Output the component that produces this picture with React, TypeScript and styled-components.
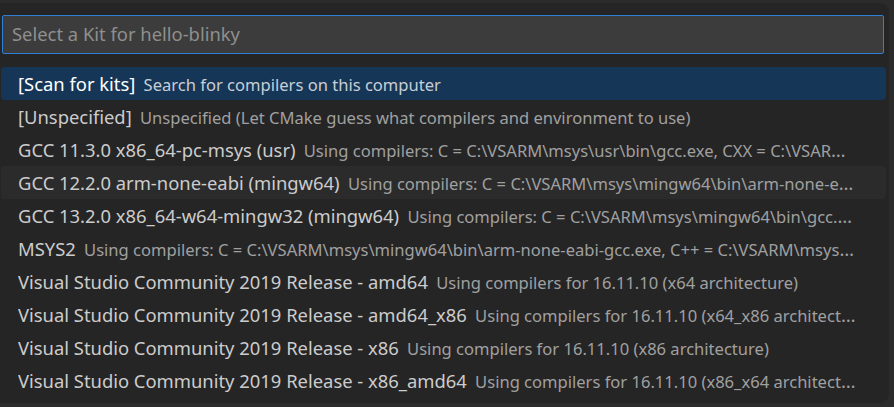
import React from "react";
import styled, { createGlobalStyle } from "styled-components";

const GlobalStyle = createGlobalStyle`
  html, body {
    margin: 0;
    padding: 0;
    background: #2b2b2b;
  }
  body {
    font-family: "Noto Sans", "Open Sans", sans-serif;
  }
`;

const Page = styled.div`
  width: 894px;
  height: 407px;
  overflow: hidden;
  background: #2b2b2b;
  display: flex;
  flex-direction: column;
`;

const Widget = styled.div`
  margin-top: 3px;
  width: 889px;
  height: 400px;
  background: #252526;
  border-radius: 0 9px 9px 0;
  padding-top: 12px;
  box-sizing: border-box;
  overflow: hidden;
  display: flex;
  flex-direction: column;
`;

const Input = styled.input`
  margin-left: 2px;
  width: 882px;
  height: 39px;
  box-sizing: border-box;
  background: #3c3c3c;
  border: 1px solid #2f7fd6;
  border-radius: 2px;
  outline: none;
  padding: 0 0 2px 9px;
  font-family: "Noto Sans", "Open Sans", sans-serif;
  font-size: 18.4px;
  color: #cccccc;
  &::placeholder {
    color: #8f8f8f;
  }
`;

const List = styled.div`
  margin-top: 13px;
  display: flex;
  flex-direction: column;
`;

const Row = styled.div<{ $state?: "selected" | "hover" }>`
  margin-left: 1px;
  width: 885px;
  height: 33px;
  box-sizing: border-box;
  padding: 0 28px 1px 17px;
  display: flex;
  align-items: center;
  border-radius: 4px;
  background: ${(p) =>
    p.$state === "selected" ? "#153657" : p.$state === "hover" ? "#2b2b2c" : "transparent"};
`;

const Line = styled.div<{ $selected?: boolean }>`
  flex: 1;
  min-width: 0;
  white-space: nowrap;
  overflow: hidden;
  text-overflow: ellipsis;
  font-size: 18.4px;
  color: ${(p) => (p.$selected ? "#c8ced6" : "#a0a0a0")};
`;

const Label = styled.span<{ $selected?: boolean }>`
  color: ${(p) => (p.$selected ? "#ffffff" : "#cccccc")};
`;

const Desc = styled.span`
  font-size: 0.9em;
  margin-left: 0.5em;
`;

type Item = { label: string; desc: string; state?: "selected" | "hover" };

const items: Item[] = [
  { label: "[Scan for kits]", desc: "Search for compilers on this computer", state: "selected" },
  { label: "[Unspecified]", desc: "Unspecified (Let CMake guess what compilers and environment to use)" },
  {
    label: "GCC 11.3.0 x86_64-pc-msys (usr)",
    desc: "Using compilers: C = C:\\VSARM\\msys\\usr\\bin\\gcc.exe, CXX = C:\\VSARM\\msys\\usr\\bin\\g++.exe",
  },
  {
    label: "GCC 12.2.0 arm-none-eabi (mingw64)",
    desc: "Using compilers: C = C:\\VSARM\\msys\\mingw64\\bin\\arm-none-eabi-gcc.exe, CXX = C:\\VSARM\\msys\\mingw64\\bin\\arm-none-eabi-g++.exe",
    state: "hover",
  },
  {
    label: "GCC 13.2.0 x86_64-w64-mingw32 (mingw64)",
    desc: "Using compilers: C = C:\\VSARM\\msys\\mingw64\\bin\\gcc.exe, CXX = C:\\VSARM\\msys\\mingw64\\bin\\g++.exe",
  },
  {
    label: "MSYS2",
    desc: "Using compilers: C = C:\\VSARM\\msys\\mingw64\\bin\\arm-none-eabi-gcc.exe, C++ = C:\\VSARM\\msys\\mingw64\\bin\\arm-none-eabi-g++.exe",
  },
  { label: "Visual Studio Community 2019 Release - amd64", desc: "Using compilers for 16.11.10 (x64 architecture)" },
  { label: "Visual Studio Community 2019 Release - amd64_x86", desc: "Using compilers for 16.11.10 (x64_x86 architecture)" },
  { label: "Visual Studio Community 2019 Release - x86", desc: "Using compilers for 16.11.10 (x86 architecture)" },
  { label: "Visual Studio Community 2019 Release - x86_amd64", desc: "Using compilers for 16.11.10 (x86_x64 architecture)" },
];

export default function App() {
  return (
    <>
      <GlobalStyle />
      <Page>
        <Widget>
          <Input placeholder="Select a Kit for hello-blinky" readOnly />
          <List>
            {items.map((it) => (
              <Row key={it.label} $state={it.state}>
                <Line $selected={it.state === "selected"}>
                  <Label $selected={it.state === "selected"}>{it.label}</Label>
                  <Desc>{it.desc}</Desc>
                </Line>
              </Row>
            ))}
          </List>
        </Widget>
      </Page>
    </>
  );
}
